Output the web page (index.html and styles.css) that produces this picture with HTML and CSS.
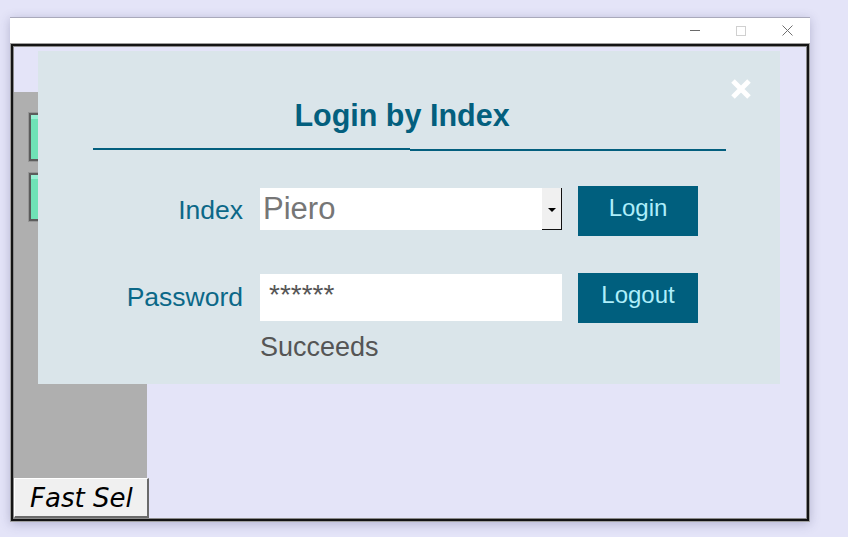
FILE: index.html
```html
<!DOCTYPE html>
<html>
<head>
<meta charset="utf-8">
<link rel="stylesheet" href="styles.css">
</head>
<body>
<div class="window">
  <div class="titlebar">
    <div class="ctl"><span class="ctl-min"></span></div>
    <div class="ctl"><span class="ctl-max"></span></div>
    <div class="ctl">
      <svg width="11" height="11" viewBox="0 0 11 11"><path d="M0.5 0.5 L10.5 10.5 M10.5 0.5 L0.5 10.5" stroke="#707070" stroke-width="1" fill="none"/></svg>
    </div>
  </div>
  <div class="frame-a">
    <div class="frame-b">
      <div class="client">
        <div class="top-space"></div>
        <div class="side-panel">
          <div class="green-btn"></div>
          <div class="green-btn"></div>
        </div>
        <div class="fast-sel">Fast Sel</div>

        <div class="dialog">
          <svg class="close-x" width="22" height="22" viewBox="0 0 22 22"><path d="M3 3 L19 19 M19 3 L3 19" stroke="#ffffff" stroke-width="5" fill="none"/></svg>
          <h1 class="dlg-title">Login by Index</h1>
          <div class="rule"><div class="rule-l"></div><div class="rule-r"></div></div>
          <div class="form-row row-index">
            <div class="label">Index</div>
            <div class="select">
              <span class="select-text">Piero</span>
              <span class="select-btn"><span class="arrow"></span></span>
            </div>
            <div class="btn">Login</div>
          </div>
          <div class="form-row row-pass">
            <div class="label">Password</div>
            <div class="input">******</div>
            <div class="btn">Logout</div>
          </div>
          <div class="status">Succeeds</div>
        </div>
      </div>
    </div>
  </div>
</div>
</body>
</html>
```
FILE: styles.css
```css
html, body {
  margin: 0;
  padding: 0;
}
body {
  width: 848px;
  height: 537px;
  background: #e4e4f8;
  font-family: "Liberation Sans", Arial, sans-serif;
  overflow: hidden;
}
.window {
  margin: 17px 0 0 10px;
  width: 800px;
  box-shadow: 0 2px 10px rgba(60, 60, 110, 0.28);
}
.titlebar {
  height: 25px;
  background: #ffffff;
  border-top: 1px solid #a9a9bb;
  display: flex;
  justify-content: flex-end;
}
.ctl {
  width: 46px;
  display: flex;
  align-items: center;
  justify-content: center;
}
.ctl-min {
  width: 10px;
  height: 1px;
  background: #6a6a6a;
}
.ctl-max {
  width: 8px;
  height: 8px;
  border: 1px solid #d0d0d0;
}
.frame-a {
  border: 1px solid #a0a0a0;
}
.frame-b {
  border: 2px solid #141414;
}
.client {
  position: relative;
  border: 1px solid #8c8c8c;
  height: 471px;
  background: #e4e4f8;
  display: flex;
  flex-direction: column;
}
.top-space {
  height: 45px;
}
.side-panel {
  width: 133px;
  height: 386px;
  background: #afafaf;
  padding: 20px 0 0 14px;
  box-sizing: border-box;
  display: flex;
  flex-direction: column;
  gap: 10px;
}
.green-btn {
  width: 100px;
  height: 50px;
  box-sizing: border-box;
  border: 1px solid #969696;
  box-shadow: inset 0 0 0 2px #5c5c5c, inset 0 4px 0 2px #98f0d4;
  background: #6fe2b6;
}
.fast-sel {
  width: 135px;
  height: 40px;
  box-sizing: border-box;
  background: #f0f0f0;
  border-top: 1px solid #ffffff;
  border-left: 1px solid #ffffff;
  border-right: 2px solid #6a6a6a;
  border-bottom: 2px solid #6a6a6a;
  font-family: "DejaVu Sans", sans-serif;
  font-style: italic;
  font-size: 26px;
  line-height: 39px;
  padding-left: 15px;
  color: #000;
}
.dialog {
  position: absolute;
  left: 24px;
  top: 4px;
  width: 742px;
  height: 333px;
  box-sizing: border-box;
  background: #dae5ea;
  padding: 46px 54px 0 55px;
}
.close-x {
  position: absolute;
  left: 692px;
  top: 27px;
}
.dlg-title {
  margin: 0;
  padding-right: 15px;
  font-size: 30.5px;
  line-height: 36px;
  font-weight: bold;
  text-align: center;
  color: #035f7e;
}
.rule {
  display: flex;
  margin-top: 15px;
  height: 3px;
}
.rule-l {
  flex: 1;
  height: 2px;
  background: #035f7e;
}
.rule-r {
  flex: 1;
  height: 2px;
  margin-top: 1px;
  background: #035f7e;
}
.form-row {
  display: flex;
  align-items: flex-start;
}
.row-index {
  margin-top: 35px;
}
.row-pass {
  margin-top: 37px;
}
.label {
  width: 150px;
  margin-right: 17px;
  text-align: right;
  font-size: 26.5px;
  line-height: 30px;
  padding-top: 9px;
  color: #0b6888;
}
.select {
  width: 302px;
  height: 42px;
  margin-top: 2px;
  background: #ffffff;
  display: flex;
  justify-content: space-between;
}
.select-text {
  font-size: 31px;
  line-height: 36px;
  padding: 3px 0 0 3px;
  color: #767676;
}
.select-btn {
  width: 20px;
  height: 42px;
  box-sizing: border-box;
  background: #f0f0f0;
  border-right: 1px solid #111;
  border-bottom: 1px solid #111;
  display: flex;
  align-items: center;
  justify-content: center;
}
.arrow {
  width: 0;
  height: 0;
  border-left: 4px solid transparent;
  border-right: 4px solid transparent;
  border-top: 4px solid #000;
  margin-top: 2px;
}
.input {
  width: 302px;
  height: 47px;
  margin-top: 1px;
  box-sizing: border-box;
  background: #ffffff;
  font-size: 28px;
  line-height: 32px;
  padding: 5px 0 0 9px;
  color: #555555;
}
.btn {
  width: 120px;
  height: 50px;
  margin-left: 16px;
  box-sizing: border-box;
  background: #005f7e;
  color: #aeeefa;
  font-size: 24px;
  line-height: 28px;
  padding-top: 8px;
  text-align: center;
}
.status {
  margin: 9px 0 0 167px;
  font-size: 27px;
  color: #555555;
}
```
